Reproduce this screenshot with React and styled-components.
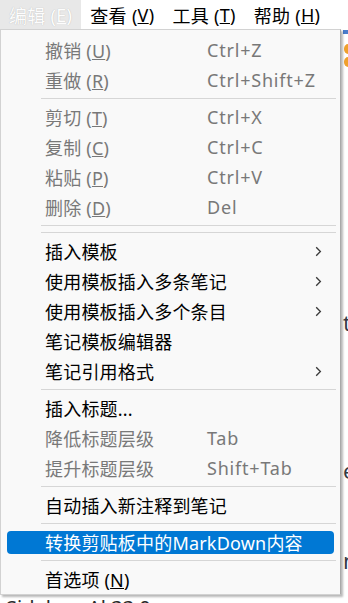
import React from 'react'
import styled, { createGlobalStyle } from 'styled-components'

const GlobalStyle = createGlobalStyle`
    html, body {
        margin: 0;
        padding: 0;
        background: #ffffff;
    }
    body {
        font-family: "Noto Sans", "Noto Sans CJK SC", sans-serif;
    }
`;

const Page = styled.div`
    position: relative;
    width: 348px;
    height: 603px;
    overflow: hidden;
    background: #ffffff;
`;

const MenuBar = styled.div`
    display: flex;
    height: 29px;
    align-items: stretch;
    background: #ffffff;
`;

const BarItem = styled.div`
    display: flex;
    align-items: center;
    padding: 0 9px;
    font-size: 18px;
    color: ${({ $open }) => ($open ? '#fdfdfd' : '#000000')};
    background: ${({ $open }) => ($open ? '#e8e8e8' : 'transparent')};
    text-shadow: ${({ $open }) => ($open ? '0 0 1px #b0b0b0' : 'none')};
    white-space: pre;
    letter-spacing: 0.3px;
`;

const Content = styled.div`
    display: grid;
    grid-template-columns: 343px 1fr;
    height: 568px;
`;

const Side = styled.div`
    display: flex;
    flex-direction: column;
    border-top: 4px solid #4a7ccc;
    margin-top: 1px;
`;

const Dot = styled.div`
    width: 8px;
    height: 10px;
    border-radius: 50%;
    background: #f0a02c;
    margin: ${({ $m }) => $m};
`;

const Peek = styled.div`
    font-size: 22px;
    line-height: 22px;
    color: #333a44;
    margin-top: ${({ $top }) => $top}px;
`;

const Footer = styled.div`
    padding-left: 6px;
    font-size: 20px;
    line-height: 22px;
    color: #2a2a2a;
    white-space: nowrap;
`;

const Menu = styled.div`
    position: absolute;
    left: 0;
    top: 29px;
    width: 341px;
    height: 566px;
    box-sizing: border-box;
    padding-top: 5px;
    background: #f9f9f9;
    border: 1px solid #d2d2d2;
    border-right-color: #a9a9a9;
    box-shadow: 2px 2px 2px rgba(0, 0, 0, 0.28);
    display: flex;
    flex-direction: column;
`;

const Item = styled.div`
    position: relative;
    height: 30px;
    display: grid;
    grid-template-columns: 162px 1fr 24px;
    align-items: center;
    padding-left: 44px;
    margin: 0 6px 0 0;
    font-size: 18px;
    white-space: pre;
    color: ${({ $disabled, $active }) => ($active ? '#ffffff' : $disabled ? '#787878' : '#000000')};

    &::before {
        content: '';
        position: absolute;
        left: 6px;
        right: 0;
        top: 4px;
        bottom: 3px;
        border-radius: 4px;
        background: ${({ $active }) => ($active ? '#0078d4' : 'transparent')};
        z-index: 0;
    }

    & > * {
        position: relative;
        z-index: 1;
    }
`;

const Label = styled.span`
    letter-spacing: 0.2px;
    grid-column: ${({ $wide }) => ($wide ? '1 / 3' : 'auto')};
`;

const Shortcut = styled.span`
    letter-spacing: 0.8px;
`;

const Arrow = styled.span`
    display: flex;
    align-items: center;
    padding-left: 5px;
    grid-column: 3;
`;

const Separator = styled.div`
    height: 1px;
    margin: 3px 4px 3px 40px;
    background: #d6d6d6;
`;

const Chevron = () => (
    <svg width="7" height="11" viewBox="0 0 7 11">
        <polyline points="1.2,1.2 5.4,5.5 1.2,9.8" fill="none" stroke="#3a3a3a" strokeWidth="1.3" />
    </svg>
)

const menu = [
    { label: '撤销', key: 'U', shortcut: 'Ctrl+Z', disabled: true },
    { label: '重做', key: 'R', shortcut: 'Ctrl+Shift+Z', disabled: true },
    { sep: true },
    { label: '剪切', key: 'T', shortcut: 'Ctrl+X', disabled: true },
    { label: '复制', key: 'C', shortcut: 'Ctrl+C', disabled: true },
    { label: '粘贴', key: 'P', shortcut: 'Ctrl+V', disabled: true },
    { label: '删除', key: 'D', shortcut: 'Del', disabled: true },
    { sep: true },
    { sep: true },
    { label: '插入模板', sub: true },
    { label: '使用模板插入多条笔记', sub: true },
    { label: '使用模板插入多个条目', sub: true },
    { label: '笔记模板编辑器' },
    { label: '笔记引用格式', sub: true },
    { sep: true },
    { label: '插入标题...' },
    { label: '降低标题层级', shortcut: 'Tab', disabled: true },
    { label: '提升标题层级', shortcut: 'Shift+Tab', disabled: true },
    { sep: true },
    { label: '自动插入新注释到笔记' },
    { sep: true },
    { label: '转换剪贴板中的MarkDown内容', active: true },
    { sep: true },
    { label: '首选项', key: 'N' },
]

const MenuLabel = ({ item }) => (
    <Label $wide={!item.shortcut && !item.sub}>
        {item.label}
        {item.key && (
            <>
                {' ('}
                <u>{item.key}</u>
                {')'}
            </>
        )}
    </Label>
)

const App = () => {
    return (
        <>
            <GlobalStyle />
            <Page>
                <MenuBar>
                    <BarItem $open>编辑 (<u>E</u>)</BarItem>
                    <BarItem>查看 (<u>V</u>)</BarItem>
                    <BarItem>工具 (<u>T</u>)</BarItem>
                    <BarItem>帮助 (<u>H</u>)</BarItem>
                </MenuBar>
                <Content>
                    <div />
                    <Side>
                        <Dot $m="10px 0 0 1px" />
                        <Dot $m="3px 0 0 1px" />
                        <Peek $top={244}>t</Peek>
                        <Peek $top={126}>e</Peek>
                        <Peek $top={68}>n</Peek>
                    </Side>
                </Content>
                <Footer>Sidebar: Al 33 0</Footer>
                <Menu>
                    {menu.map((item, i) =>
                        item.sep ? (
                            <Separator key={i} />
                        ) : (
                            <Item key={i} $disabled={item.disabled} $active={item.active}>
                                <MenuLabel item={item} />
                                {item.shortcut && <Shortcut>{item.shortcut}</Shortcut>}
                                {item.sub && (
                                    <Arrow>
                                        <Chevron />
                                    </Arrow>
                                )}
                            </Item>
                        )
                    )}
                </Menu>
            </Page>
        </>
    )
}

export default App
